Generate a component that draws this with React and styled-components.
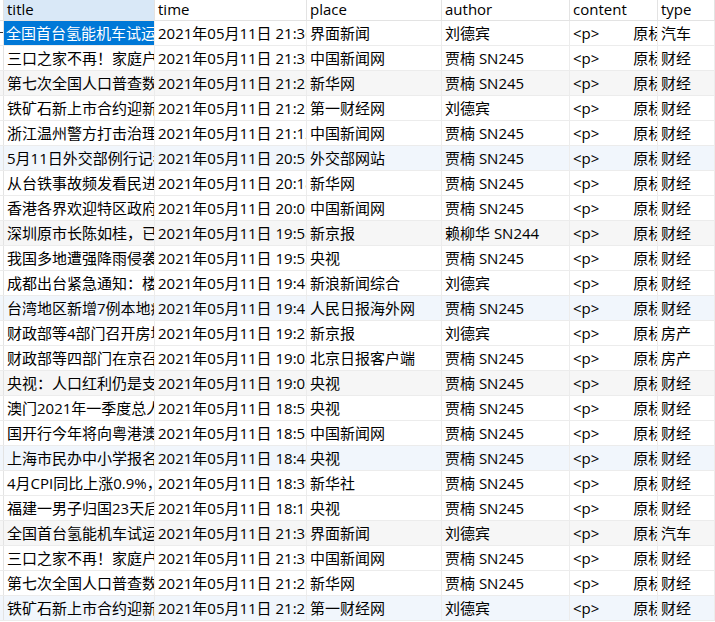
import React from 'react';
import styled, { createGlobalStyle } from 'styled-components';

const GlobalStyle = createGlobalStyle`
  html, body {
    margin: 0;
    padding: 0;
    background: #fff;
  }
  body {
    font-family: "Open Sans", "Noto Sans CJK SC", sans-serif;
    font-size: 15px;
    color: #000;
  }
`;

const COLS = '4px 151px 152px 135px 128px 88px 1fr';

const rows = [
  ['全国首台氢能机车试运行', '2021年05月11日 21:36:12', '界面新闻', '刘德宾', '汽车'],
  ['三口之家不再！家庭户规模继续缩小', '2021年05月11日 21:32:40', '中国新闻网', '贾楠 SN245', '财经'],
  ['第七次全国人口普查数据公布', '2021年05月11日 21:28:05', '新华网', '贾楠 SN245', '财经'],
  ['铁矿石新上市合约迎新高', '2021年05月11日 21:21:33', '第一财经网', '刘德宾', '财经'],
  ['浙江温州警方打击治理跨境赌博', '2021年05月11日 21:12:48', '中国新闻网', '贾楠 SN245', '财经'],
  ['5月11日外交部例行记者会', '2021年05月11日 20:55:20', '外交部网站', '贾楠 SN245', '财经'],
  ['从台铁事故频发看民进党当局', '2021年05月11日 20:18:09', '新华网', '贾楠 SN245', '财经'],
  ['香港各界欢迎特区政府完善选举', '2021年05月11日 20:06:51', '中国新闻网', '贾楠 SN245', '财经'],
  ['深圳原市长陈如桂，已任新职', '2021年05月11日 19:58:14', '新京报', '赖柳华 SN244', '财经'],
  ['我国多地遭强降雨侵袭', '2021年05月11日 19:52:37', '央视', '贾楠 SN245', '财经'],
  ['成都出台紧急通知：楼市调控', '2021年05月11日 19:46:02', '新浪新闻综合', '刘德宾', '财经'],
  ['台湾地区新增7例本地病例', '2021年05月11日 19:41:26', '人民日报海外网', '贾楠 SN245', '财经'],
  ['财政部等4部门召开房地产税座谈会', '2021年05月11日 19:27:45', '新京报', '刘德宾', '房产'],
  ['财政部等四部门在京召开座谈会', '2021年05月11日 19:08:19', '北京日报客户端', '贾楠 SN245', '房产'],
  ['央视：人口红利仍是支撑发展', '2021年05月11日 19:03:58', '央视', '贾楠 SN245', '财经'],
  ['澳门2021年一季度总人口', '2021年05月11日 18:57:30', '央视', '贾楠 SN245', '财经'],
  ['国开行今年将向粤港澳大湾区', '2021年05月11日 18:52:11', '中国新闻网', '贾楠 SN245', '财经'],
  ['上海市民办中小学报名开始', '2021年05月11日 18:44:03', '央视', '贾楠 SN245', '财经'],
  ['4月CPI同比上涨0.9%，PPI上涨', '2021年05月11日 18:36:47', '新华社', '贾楠 SN245', '财经'],
  ['福建一男子归国23天后确诊', '2021年05月11日 18:15:22', '央视', '贾楠 SN245', '财经'],
  ['全国首台氢能机车试运行', '2021年05月11日 21:36:12', '界面新闻', '刘德宾', '汽车'],
  ['三口之家不再！家庭户规模继续缩小', '2021年05月11日 21:32:40', '中国新闻网', '贾楠 SN245', '财经'],
  ['第七次全国人口普查数据公布', '2021年05月11日 21:28:05', '新华网', '贾楠 SN245', '财经'],
  ['铁矿石新上市合约迎新高', '2021年05月11日 21:21:33', '第一财经网', '刘德宾', '财经'],
];

const Grid = styled.div`
  width: 715px;
  height: 622px;
  overflow: hidden;
`;

const HeaderRow = styled.div`
  display: grid;
  grid-template-columns: ${COLS};
  height: 21px;
  border-bottom: 1px solid #e3e3e3;
  box-sizing: border-box;
`;

const HeadCell = styled.div`
  box-sizing: border-box;
  padding: 0 0 0 3px;
  line-height: 19px;
  border-right: 1px solid #e3e3e3;
  background: ${p => (p.$active ? '#d9e8f7' : '#fff')};
  white-space: nowrap;
  overflow: hidden;
`;

// every third row carries a faint tint, alternating grey and blue
const tint = i => {
  if (i % 6 === 5) return '#f1f6fc';
  if (i % 3 === 2) return '#f6f6f6';
  return '#fff';
};

const Row = styled.div`
  display: grid;
  grid-template-columns: ${COLS};
  height: 25px;
  box-sizing: border-box;
  border-bottom: 1px solid #ececec;
  background: ${p => tint(p.$index)};
`;

const Cell = styled.div`
  box-sizing: border-box;
  padding-left: ${p => (p.$selected ? '2px' : '3px')};
  line-height: 24px;
  border-right: 1px solid #ececec;
  white-space: pre;
  overflow: hidden;
  background: ${p => (p.$selected ? '#0078d7' : 'transparent')};
  color: ${p => (p.$selected ? '#fff' : '#000')};
`;

const Indicator = styled.div`
  position: relative;
  border-right: 1px solid #e3e3e3;
  &::after {
    content: '';
    display: ${p => (p.$current ? 'block' : 'none')};
    position: absolute;
    left: 0;
    top: 11px;
    width: 3px;
    height: 1px;
    background: #333;
  }
`;

export default function App() {
  return (
    <>
      <GlobalStyle />
      <Grid>
        <HeaderRow>
          <HeadCell />
          <HeadCell $active>title</HeadCell>
          <HeadCell>time</HeadCell>
          <HeadCell>place</HeadCell>
          <HeadCell>author</HeadCell>
          <HeadCell>content</HeadCell>
          <HeadCell>type</HeadCell>
        </HeaderRow>
        {rows.map((r, i) => (
          <Row key={i} $index={i}>
            <Indicator $current={i === 0} />
            <Cell $selected={i === 0}>{r[0]}</Cell>
            <Cell>{r[1]}</Cell>
            <Cell>{r[2]}</Cell>
            <Cell>{r[3]}</Cell>
            <Cell>{'<p>\u3000\u3000 原标题'}</Cell>
            <Cell>{r[4]}</Cell>
          </Row>
        ))}
      </Grid>
    </>
  );
}
